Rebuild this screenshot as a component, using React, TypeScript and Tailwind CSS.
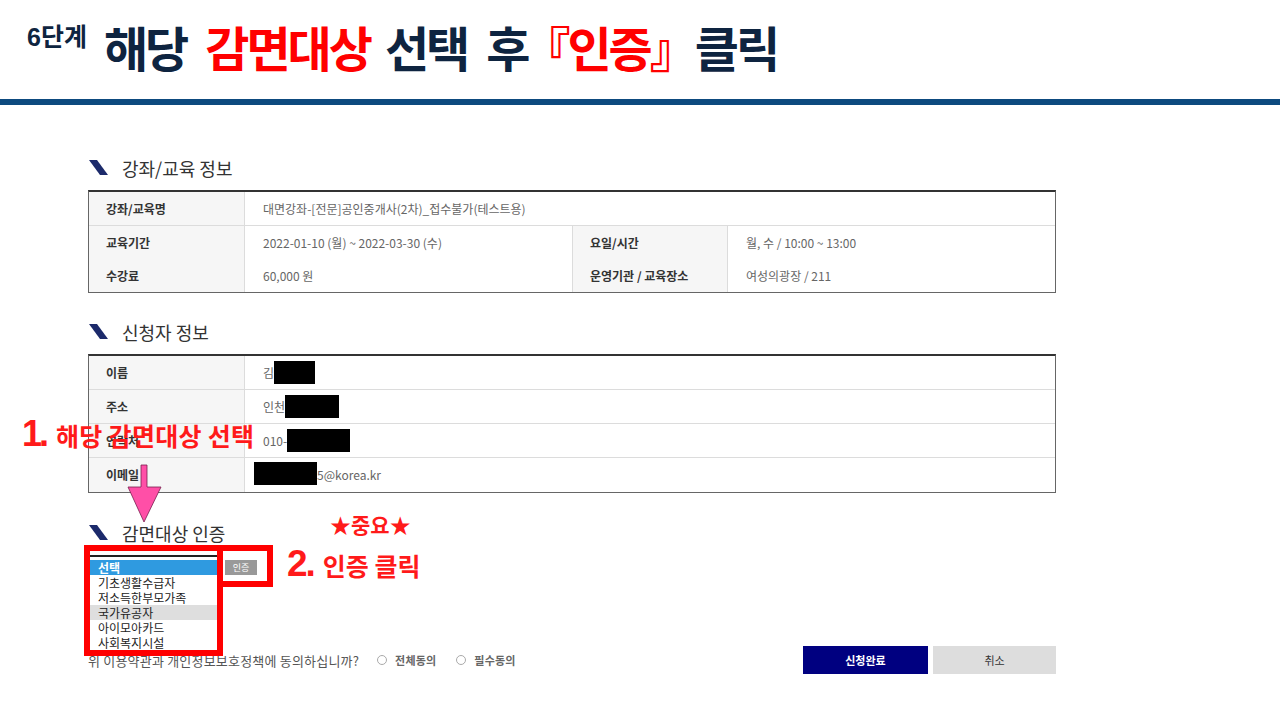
import React from 'react';

const FONT = { fontFamily: '"Noto Sans CJK KR", "Noto Sans", sans-serif' };
const NUM = { fontFamily: '"Liberation Sans", Arial, sans-serif' };

function SectionTitle({ children }: { children: React.ReactNode }) {
  return (
    <div className="flex items-center h-[22px]">
      <svg width="20" height="16" viewBox="0 0 20 16" className="ml-[1px]">
        <polygon points="0,0 8,0 19,15 11,15" fill="#1c2a6b" />
      </svg>
      <span className="ml-[13px] text-[18px] leading-none text-[#333]">{children}</span>
    </div>
  );
}

function Label({ children, className = "" }: { children: React.ReactNode; className?: string }) {
  return (
    <div className={`flex items-center pl-[17px] bg-[#f6f6f6] border-r border-[#dcdcdc] text-[12px] font-bold text-[#333] ${className}`}>
      {children}
    </div>
  );
}

function Value({ children, className = "" }: { children: React.ReactNode; className?: string }) {
  return <div className={`flex items-center pl-[18px] text-[12px] text-[#666] ${className}`}>{children}</div>;
}

function Redact({ w }: { w: number }) {
  return <span className="inline-block h-[23px] bg-black" style={{ width: w }} />;
}

export default function App() {
  const applicant = [
    { label: "이름", value: <><span>김</span><Redact w={41} /></> },
    { label: "주소", value: <><span>인천</span><Redact w={54} /></> },
    { label: "연락처", value: <><span>010-</span><Redact w={63} /></> },
    { label: "이메일", value: <><span className="-ml-[9px]"><Redact w={63} /></span><span>5@korea.kr</span></> },
  ];

  const options = ["기초생활수급자", "저소득한부모가족", "국가유공자", "아이모아카드", "사회복지시설"];

  return (
    <div className="relative w-[1280px] h-[720px] bg-white overflow-hidden" style={FONT}>
      {/* Header */}
      <div className="flex items-start h-[99px] pl-[27px] pt-[22px]">
        <div className="mt-[1px] text-[25px] leading-none font-bold text-[#0e2440]">
          <span style={NUM}>6</span>단계
        </div>
        <div className="ml-[17px] flex text-[48px] leading-none font-bold text-[#0e2440] tracking-[-3px]">
          <span>해당</span>
          <span className="ml-[19px] text-[#ff0000]">감면대상</span>
          <span className="ml-[15px]">선택</span>
          <span className="ml-[19px]">후</span>
          <span className="-ml-[5px] text-[#ff0000]">『인증』</span>
          <span>클릭</span>
        </div>
      </div>
      <div className="h-[6px] bg-[#0d4a7f]" />

      {/* Content */}
      <div className="pl-[88px] w-[1056px] pt-[52px]">
        <SectionTitle>강좌/교육 정보</SectionTitle>
        <div className="mt-[11px] border border-[#666] border-t-2 border-t-[#333]">
          <div className="flex h-[34px] border-b border-[#dcdcdc]">
            <Label className="w-[156px]">강좌/교육명</Label>
            <Value>대면강좌-[전문]공인중개사(2차)_접수불가(테스트용)</Value>
          </div>
          <div className="grid grid-cols-[156px_328px_155px_1fr] grid-rows-[33px_33px]">
            <Label>교육기간</Label>
            <Value className="border-r border-[#dcdcdc]">2022-01-10 (월) ~ 2022-03-30 (수)</Value>
            <Label>요일/시간</Label>
            <Value>월, 수 / 10:00 ~ 13:00</Value>
            <Label>수강료</Label>
            <Value className="border-r border-[#dcdcdc]">60,000 원</Value>
            <Label>운영기관 / 교육장소</Label>
            <Value>여성의광장 / 211</Value>
          </div>
        </div>

        <div className="mt-[28px]">
          <SectionTitle>신청자 정보</SectionTitle>
        </div>
        <div className="mt-[11px] border border-[#666] border-t-2 border-t-[#333]">
          {applicant.map((r, i) => (
            <div key={r.label} className={`flex h-[34px] ${i < applicant.length - 1 ? "border-b border-[#dcdcdc]" : ""}`}>
              <Label className="w-[156px]">{r.label}</Label>
              <Value>{r.value}</Value>
            </div>
          ))}
        </div>

        <div className="mt-[29px]">
          <SectionTitle>감면대상 인증</SectionTitle>
        </div>
        <div className="mt-[13px] flex items-start h-[20px]">
          <div className="relative w-[130px] h-[20px]">
            {/* open select menu */}
            <div className="absolute left-0 top-[-2px] w-[130px] bg-white border-t-2 border-[#222] pt-[3px] z-10">
              <div className="h-[15px] bg-[#2f9ae0] text-white text-[12px] font-bold leading-[15px] pl-[10px] overflow-hidden">선택</div>
              {options.map(o => (
                <div key={o} className={`h-[15px] text-[12px] leading-[15px] pl-[10px] text-[#222] overflow-hidden ${o === "국가유공자" ? "bg-[#dedede]" : ""}`}>{o}</div>
              ))}
            </div>
          </div>
          <button className="ml-[7px] mt-[3px] w-[32px] h-[15px] bg-[#999] text-white text-[9px] leading-[15px]">인증</button>
        </div>

        <div className="mt-[69px] flex items-center justify-between h-[28px]">
          <div className="flex items-center text-[13px] text-[#555] tracking-[0.2px]">
            <span className="mt-[2px]">위 이용약관과 개인정보보호정책에 동의하십니까?</span>
            <span className="ml-[18px] w-[10px] h-[10px] rounded-full border border-[#aaa]" />
            <span className="ml-[8px] text-[11px] font-bold text-[#666]">전체동의</span>
            <span className="ml-[20px] w-[10px] h-[10px] rounded-full border border-[#aaa]" />
            <span className="ml-[8px] text-[11px] font-bold text-[#666]">필수동의</span>
          </div>
          <div className="flex gap-[5px]">
            <button className="w-[125px] h-[28px] bg-[#000080] text-white text-[11px] font-bold">신청완료</button>
            <button className="w-[123px] h-[28px] bg-[#dddddd] text-[#333] text-[11px]">취소</button>
          </div>
        </div>
      </div>

      {/* Annotations */}
      <div className="absolute left-[84px] top-[545px] w-[139px] h-[111px] border-[6px] border-[#ff0000] z-20" />
      <div className="absolute left-[217px] top-[545px] w-[56px] h-[42px] border-[6px] border-[#ff0000] z-20" />

      <div className="absolute left-[22px] top-[416px] flex items-baseline text-[#ff1a1a] font-bold z-20">
        <span className="text-[36px] leading-none tracking-[-3px]" style={NUM}>1.</span>
        <span className="ml-[10px] text-[25px] leading-none tracking-[0.3px]">해당 감면대상 선택</span>
      </div>

      <div className="absolute left-[330px] top-[514px] text-[21px] leading-none font-bold text-[#ff1a1a] z-20">★중요★</div>
      <div className="absolute left-[287px] top-[545px] flex items-baseline text-[#ff1a1a] font-bold z-20">
        <span className="text-[37px] leading-none tracking-[-2px]" style={NUM}>2.</span>
        <span className="ml-[9px] text-[25px] leading-none">인증 클릭</span>
      </div>

      <svg className="absolute left-[124px] top-[464px] z-20" width="42" height="60" viewBox="0 0 42 60">
        <path d="M17 1 H23 V23 H37 L20 58 L4 23 H17 Z" fill="#ff4fa7" stroke="#7a1f4f" strokeWidth="0.8" />
      </svg>
    </div>
  );
}
